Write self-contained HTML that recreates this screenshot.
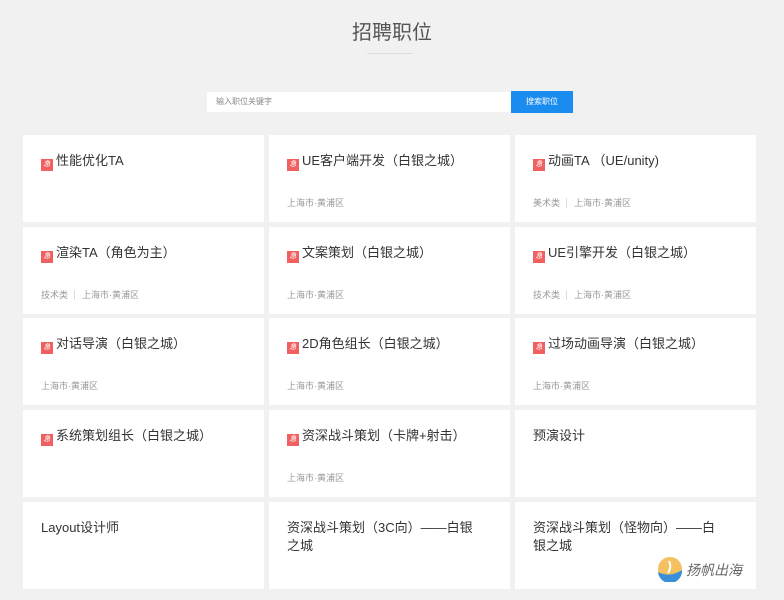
<html><head><style>
body{margin:0;background:#f1f1f1;font-family:"Liberation Sans","Noto Sans CJK SC",sans-serif;width:784px;height:600px;overflow:hidden;position:relative}
h1{position:absolute;top:16px;left:0;width:784px;text-align:center;font-size:20px;font-weight:normal;color:#555;margin:0}
.ul{position:absolute;top:53px;left:367px;width:46px;height:1px;background:#ddd}
.inp{position:absolute;left:207px;top:92px;width:304px;height:20px;background:#fff;font-size:8px;color:#888;line-height:20px;box-sizing:border-box;padding-left:9px}
.btn{position:absolute;left:511px;top:91px;width:62px;height:22px;background:#1a8cf0;color:#fff;font-size:8px;line-height:22px;text-align:center}
.c{position:absolute;width:241px;height:87px;background:#fff}
.t{position:absolute;left:18px;top:17px;font-size:13px;color:#333;line-height:18px;width:215px;white-space:nowrap}
.i{display:inline-block;width:12px;height:12px;background:#f06060;vertical-align:-1px;margin-right:3px;color:#fff;font-size:7px;text-align:center;line-height:12px}
.m{position:absolute;left:18px;top:61px;font-size:9px;color:#999}
.m span{border-left:1px solid #ddd;margin-left:6px;padding-left:7px}
</style></head><body>
<h1>招聘职位</h1><div class="ul"></div>
<div class="inp">输入职位关键字</div><div class="btn">搜索职位</div>

<div class="c" style="left:23px;top:135px"><div class="t"><i class="i">急</i>性能优化TA</div></div>
<div class="c" style="left:269px;top:135px"><div class="t"><i class="i">急</i>UE客户端开发（白银之城）</div><div class="m">上海市·黄浦区</div></div>
<div class="c" style="left:515px;top:135px"><div class="t"><i class="i">急</i>动画TA （UE/unity)</div><div class="m">美术类<span>上海市·黄浦区</span></div></div>

<div class="c" style="left:23px;top:227px"><div class="t"><i class="i">急</i>渲染TA（角色为主）</div><div class="m">技术类<span>上海市·黄浦区</span></div></div>
<div class="c" style="left:269px;top:227px"><div class="t"><i class="i">急</i>文案策划（白银之城）</div><div class="m">上海市·黄浦区</div></div>
<div class="c" style="left:515px;top:227px"><div class="t"><i class="i">急</i>UE引擎开发（白银之城）</div><div class="m">技术类<span>上海市·黄浦区</span></div></div>

<div class="c" style="left:23px;top:318px"><div class="t"><i class="i">急</i>对话导演（白银之城）</div><div class="m">上海市·黄浦区</div></div>
<div class="c" style="left:269px;top:318px"><div class="t"><i class="i">急</i>2D角色组长（白银之城）</div><div class="m">上海市·黄浦区</div></div>
<div class="c" style="left:515px;top:318px"><div class="t"><i class="i">急</i>过场动画导演（白银之城）</div><div class="m">上海市·黄浦区</div></div>

<div class="c" style="left:23px;top:410px"><div class="t"><i class="i">急</i>系统策划组长（白银之城）</div></div>
<div class="c" style="left:269px;top:410px"><div class="t"><i class="i">急</i>资深战斗策划（卡牌+射击）</div><div class="m">上海市·黄浦区</div></div>
<div class="c" style="left:515px;top:410px"><div class="t">预演设计</div></div>

<div class="c" style="left:23px;top:502px"><div class="t">Layout设计师</div></div>
<div class="c" style="left:269px;top:502px"><div class="t">资深战斗策划（3C向）——白银<br>之城</div></div>
<div class="c" style="left:515px;top:502px"><div class="t">资深战斗策划（怪物向）——白<br>银之城</div>
<svg style="position:absolute;left:142px;top:54px" width="26" height="26" viewBox="0 0 26 26"><circle cx="13" cy="13" r="12" fill="#f5c060"/><path d="M1 16 Q13 22 25 14 A12 12 0 0 1 1 16Z" fill="#3a8fd8"/><path d="M12 5 Q15 11 11 17" stroke="#fff" stroke-width="2" fill="none"/></svg>
<div style="position:absolute;left:171px;top:58px;font-size:14px;color:#666;font-style:italic">扬帆出海</div></div>
</body></html>
